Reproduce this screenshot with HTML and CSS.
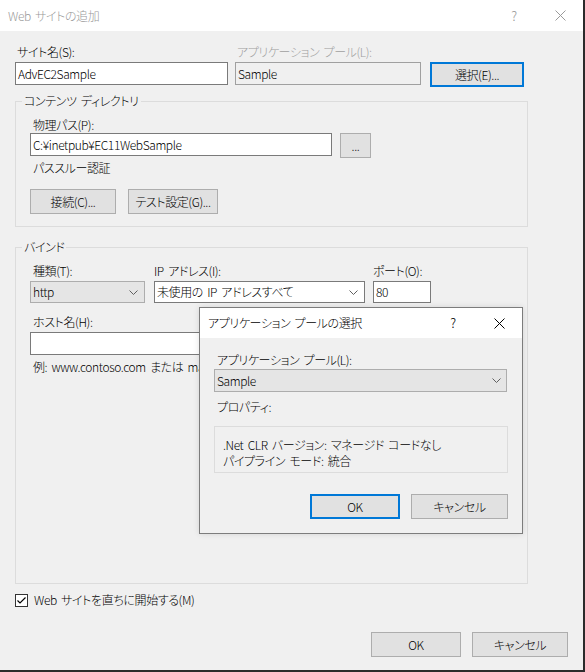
FILE: index.html
```html
<!DOCTYPE html>
<html lang="ja">
<head>
<meta charset="utf-8">
<title>Web サイトの追加</title>
<link rel="stylesheet" href="styles.css">
</head>
<body>
<div class="window">
  <div class="titlebar">
    <span class="title">Web サイトの追加</span>
    <span class="tb-btn help">?</span>
    <span class="tb-btn close"><svg width="11" height="11" viewBox="0 0 11 11"><path d="M0.5 0.5L10.5 10.5M10.5 0.5L0.5 10.5" stroke="#9a9a9a" stroke-width="1" fill="none"/></svg></span>
  </div>
  <div class="content">
    <div class="site-grid">
      <div class="lbl pad2">サイト名(S):</div>
      <div class="lbl pad2 disabled">アプリケーション プール(L):</div>
      <div></div>
      <div class="textbox">AdvEC2Sample</div>
      <div class="textbox readonly">Sample</div>
      <button class="btn default sel-btn">選択(E)...</button>
    </div>

    <div class="group g1">
      <div class="group-title">コンテンツ ディレクトリ</div>
      <div class="lbl pad3 mt8">物理パス(P):</div>
      <div class="path-row">
        <div class="textbox path-box">C:¥inetpub¥EC11WebSample</div>
        <button class="btn dots-btn">...</button>
      </div>
      <div class="lbl pad3 mt2">パススルー認証</div>
      <div class="btn-row">
        <button class="btn w86">接続(C)...</button>
        <button class="btn w90">テスト設定(G)...</button>
      </div>
    </div>

    <div class="group g2">
      <div class="group-title">バインド</div>
      <div class="bind-row">
        <div class="col">
          <div class="lbl pad3">種類(T):</div>
          <div class="combo gray w115"><span>http</span><svg width="9" height="5" viewBox="0 0 9 5"><path d="M0.5 0.5L4.5 4.5L8.5 0.5" stroke="#606060" fill="none"/></svg></div>
        </div>
        <div class="col col-ip">
          <div class="lbl">IP アドレス(I):</div>
          <div class="combo white w211"><span>未使用の IP アドレスすべて</span><svg width="9" height="5" viewBox="0 0 9 5"><path d="M0.5 0.5L4.5 4.5L8.5 0.5" stroke="#606060" fill="none"/></svg></div>
        </div>
        <div class="col col-port">
          <div class="lbl">ポート(O):</div>
          <div class="textbox port-box">80</div>
        </div>
      </div>
      <div class="lbl pad3 mt11">ホスト名(H):</div>
      <div class="textbox host-box"></div>
      <div class="lbl pad3 mt4">例: www.contoso.com または marketing.contoso.com</div>
    </div>

    <div class="check-row">
      <svg class="checkbox" width="13" height="13" viewBox="0 0 13 13"><rect x="0.5" y="0.5" width="12" height="12" fill="#fff" stroke="#333"/><path d="M2.5 6.5L5 9L10.5 3.5" stroke="#000" stroke-width="1.2" fill="none"/></svg>
      <span>Web サイトを直ちに開始する(M)</span>
    </div>

    <div class="footer">
      <button class="btn w90">OK</button>
      <button class="btn w96">キャンセル</button>
    </div>
  </div>

  <div class="popup">
    <div class="popup-title">
      <span class="ptitle">アプリケーション プールの選択</span>
      <span class="tb-btn ptb help-dark">?</span>
      <span class="tb-btn ptb"><svg width="11" height="11" viewBox="0 0 11 11"><path d="M0.5 0.5L10.5 10.5M10.5 0.5L0.5 10.5" stroke="#000" stroke-width="1" fill="none"/></svg></span>
    </div>
    <div class="popup-body">
      <div class="lbl pad3">アプリケーション プール(L):</div>
      <div class="combo gray pool-combo"><span>Sample</span><svg width="9" height="5" viewBox="0 0 9 5"><path d="M0.5 0.5L4.5 4.5L8.5 0.5" stroke="#606060" fill="none"/></svg></div>
      <div class="lbl pad3 mt7">プロパティ:</div>
      <div class="props">
        <div>.Net CLR バージョン: マネージド コードなし</div>
        <div>パイプライン モード: 統合</div>
      </div>
      <div class="pfooter">
        <button class="btn default w90">OK</button>
        <button class="btn w97">キャンセル</button>
      </div>
    </div>
  </div>
</div>
</body>
</html>
```

FILE: styles.css
```css
* { box-sizing: border-box; }

body {
  margin: 0;
  background: #2b2b2b;
  font-family: "Noto Sans CJK JP", "Noto Sans", sans-serif;
  font-size: 12px;
  font-weight: 300;
  line-height: 16px;
  letter-spacing: -0.4px;
  word-spacing: 2px;
  color: #000;
  font-feature-settings: "palt";
}

.window {
  position: relative;
  width: 583px;
  height: 670px;
  background: #f0f0f0;
}

.titlebar {
  display: flex;
  align-items: center;
  height: 31px;
  background: #fff;
}

.title {
  flex: 1;
  padding-left: 8px;
  color: #999;
}

.tb-btn {
  display: flex;
  align-items: center;
  justify-content: center;
  width: 46px;
  height: 31px;
}

.help { color: #999; font-size: 13px; }

.content {
  padding: 13px 15px 0 15px;
}

.lbl { white-space: nowrap; }
.pad2 { padding-left: 2px; }
.pad3 { padding-left: 3px; }
.disabled { color: #a0a0a0; }
.mt2 { margin-top: 2px; }
.mt4 { margin-top: 4px; }
.mt7 { margin-top: 7px; }
.mt8 { margin-top: 8px; }
.mt11 { margin-top: 11px; }

.site-grid {
  display: grid;
  grid-template-columns: 213px 186px 96px;
  column-gap: 7px;
  row-gap: 2px;
  align-items: start;
}

.textbox {
  height: 23px;
  border: 1px solid #7a7a7a;
  background: #fff;
  padding: 0 2px;
  line-height: 21px;
  white-space: nowrap;
  overflow: hidden;
}

.textbox.readonly {
  background: #f0f0f0;
  border-color: #a0a0a0;
}

.btn {
  height: 25px;
  padding: 0;
  border: 1px solid #adadad;
  background: #e1e1e1;
  font: inherit;
  letter-spacing: inherit;
  word-spacing: inherit;
  font-feature-settings: "palt";
  color: #000;
  line-height: 23px;
}

.btn.default {
  border: 2px solid #0078d7;
  line-height: 21px;
}

.sel-btn { margin-left: 2px; }

.group {
  width: 513px;
  border: 1px solid #dcdcdc;
  padding: 0 0 0 14px;
}

.group-title {
  width: max-content;
  margin: -9px 0 0 -8px;
  padding: 0 2px;
  background: #f0f0f0;
}

.g1 {
  margin-top: 14px;
  padding-bottom: 12px;
}

.path-row {
  display: flex;
  align-items: flex-start;
  gap: 8px;
}

.path-box { width: 302px; }
.dots-btn { width: 31px; line-height: 18px; }

.btn-row {
  display: flex;
  gap: 12px;
  margin-top: 13px;
}

.w86 { width: 86px; }
.w90 { width: 90px; }
.w96 { width: 96px; }
.w97 { width: 97px; }

.g2 {
  margin-top: 20px;
  height: 337px;
}

.bind-row {
  display: flex;
  margin-top: 8px;
}

.col {
  display: flex;
  flex-direction: column;
  gap: 2px;
}

.col-ip { margin-left: 9px; }
.col-port { margin-left: 8px; }

.combo {
  display: flex;
  align-items: center;
  justify-content: space-between;
  height: 22px;
  padding: 0 6px 0 2px;
  border: 1px solid #adadad;
  white-space: nowrap;
}

.combo.gray { background: #e5e5e5; }
.combo.white { background: #fff; border-color: #7a7a7a; }

.w115 { width: 115px; }
.w211 { width: 211px; }
.port-box { width: 58px; height: 22px; line-height: 20px; }
.host-box { width: 401px; margin-top: 2px; }

.check-row {
  display: flex;
  align-items: center;
  margin-top: 8px;
  height: 16px;
}

.checkbox { margin-right: 6px; display: block; }

.footer {
  display: flex;
  justify-content: flex-end;
  gap: 11px;
  margin-top: 24px;
}

/* popup dialog */
.popup {
  position: absolute;
  left: 199px;
  top: 307px;
  width: 324px;
  height: 227px;
  border: 1px solid #7c7c7c;
  background: #f0f0f0;
  box-shadow: 0 0 6px rgba(0, 0, 0, 0.12);
}

.popup-title {
  display: flex;
  align-items: center;
  height: 30px;
  background: #fff;
}

.ptitle {
  flex: 1;
  padding-left: 8px;
}

.ptb { height: 30px; }
.help-dark { font-size: 13px; }

.popup-body {
  padding: 14px 14px 0 14px;
}

.pool-combo {
  width: 293px;
  height: 23px;
  margin-top: 1px;
  padding-right: 5px;
}

.props {
  height: 47px;
  margin-top: 11px;
  padding: 10px 8px 0 8px;
  border: 1px solid #dcdcdc;
  background: #f0f0f0;
  white-space: nowrap;
}

.pfooter {
  display: flex;
  justify-content: flex-end;
  gap: 11px;
  margin-top: 21px;
}
```
